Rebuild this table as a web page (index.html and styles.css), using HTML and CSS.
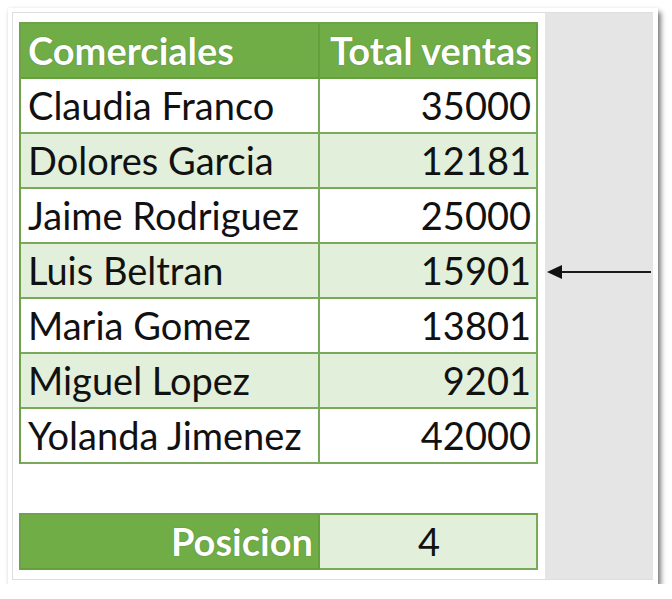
FILE: index.html
```html
<!DOCTYPE html>
<html>
<head>
<meta charset="utf-8">
<link rel="stylesheet" href="styles.css">
</head>
<body>
<div class="frame">
  <div class="sheet">
    <div class="print">
      <table class="data">
        <thead>
          <tr><th class="name">Comerciales</th><th class="num">Total ventas</th></tr>
        </thead>
        <tbody>
          <tr><td class="name">Claudia Franco</td><td class="num">35000</td></tr>
          <tr class="alt"><td class="name">Dolores Garcia</td><td class="num">12181</td></tr>
          <tr><td class="name">Jaime Rodriguez</td><td class="num">25000</td></tr>
          <tr class="alt"><td class="name">Luis Beltran</td><td class="num">15901</td></tr>
          <tr><td class="name">Maria Gomez</td><td class="num">13801</td></tr>
          <tr class="alt"><td class="name">Miguel Lopez</td><td class="num">9201</td></tr>
          <tr><td class="name">Yolanda Jimenez</td><td class="num">42000</td></tr>
        </tbody>
      </table>
      <table class="pos">
        <tr><th class="label">Posicion</th><td class="value">4</td></tr>
      </table>
    </div>
    <div class="gray">
      <svg class="arrow" width="108" height="20" viewBox="0 0 108 20">
        <line x1="14" y1="10" x2="106" y2="10" stroke="#1a1a1a" stroke-width="2"/>
        <polygon points="2,10 17,3 17,17" fill="#111"/>
      </svg>
    </div>
  </div>
</div>
</body>
</html>
```
FILE: styles.css
```css
html, body {
  margin: 0;
  padding: 0;
  background: #ffffff;
}
body {
  font-family: Lato, "Liberation Sans", sans-serif;
}
.frame {
  margin: 8px 0 0 8px;
  padding: 4px;
  width: 642px;
  background: #ffffff;
  box-shadow: 3px 4px 5px rgba(0, 0, 0, 0.5), 0 0 3px rgba(0, 0, 0, 0.08);
}
.sheet {
  display: flex;
  width: 640px;
  height: 566px;
  border: 1px solid #dedede;
  border-right: none;
  background: #ffffff;
}
.print {
  width: 532px;
  padding: 9px 0 0 6px;
  box-sizing: border-box;
}
.gray {
  flex: 1;
  background: #e5e5e5;
}
.arrow {
  display: block;
  margin-top: 249px;
}
table {
  border-collapse: separate;
  border-spacing: 0;
  border-top: 2px solid #70a24c;
  border-left: 2px solid #70a24c;
  table-layout: fixed;
}
.data {
  width: 519px;
}
th, td {
  height: 53px;
  line-height: 53px;
  padding: 0 5px 0 7px;
  border-right: 2px solid #79a95a;
  border-bottom: 2px solid #79a95a;
  font-size: 38px;
  color: #111;
  vertical-align: middle;
  box-sizing: content-box;
  white-space: nowrap;
  overflow: hidden;
}
th {
  background: #70ad47;
  color: #ffffff;
  font-weight: 700;
  text-shadow: 0 0 1px rgba(0, 40, 0, 0.5);
  border-color: #66a03e;
}
.data td.name, .data th.name {
  width: 285px;
  text-align: left;
}
.num {
  text-align: right;
}
.data th.num {
  padding-left: 2px;
  padding-right: 4px;
}
.alt td {
  background: #e2efda;
}
.pos {
  margin-top: 49px;
  width: 519px;
}
.pos .label {
  width: 285px;
  text-align: right;
}
.pos .value {
  background: #e2efda;
  text-align: center;
}
```
